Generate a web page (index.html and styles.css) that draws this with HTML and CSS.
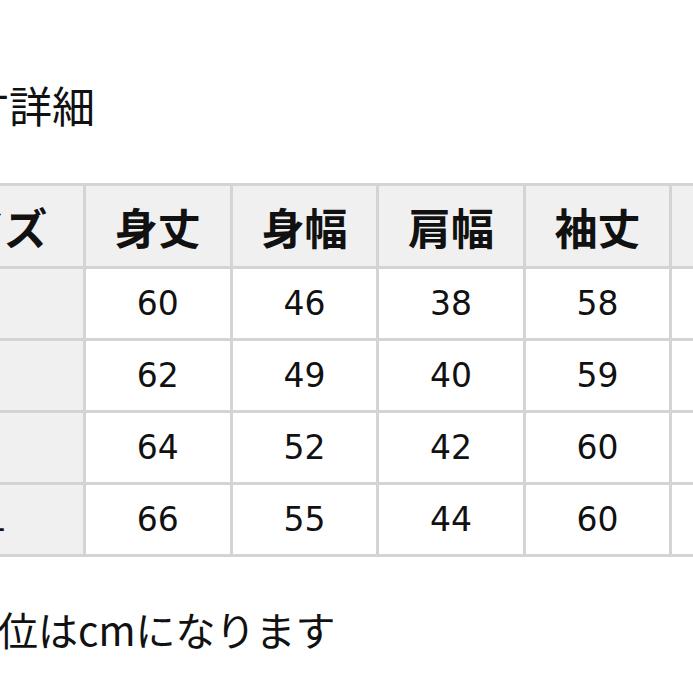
FILE: index.html
```html
<!DOCTYPE html>
<html lang="ja">
<head>
<meta charset="utf-8">
<link rel="stylesheet" href="styles.css">
</head>
<body>
<div class="page">
  <h2 class="title">採寸詳細</h2>
  <table class="sizes">
    <colgroup>
      <col class="c-label"><col class="c-val"><col class="c-val"><col class="c-val"><col class="c-val"><col class="c-val">
    </colgroup>
    <thead>
      <tr><th class="label">サイズ</th><th>身丈</th><th>身幅</th><th>肩幅</th><th>袖丈</th><th>着丈</th></tr>
    </thead>
    <tbody>
      <tr><td class="label">S</td><td>60</td><td>46</td><td>38</td><td>58</td><td></td></tr>
      <tr><td class="label">M</td><td>62</td><td>49</td><td>40</td><td>59</td><td></td></tr>
      <tr><td class="label">L</td><td>64</td><td>52</td><td>42</td><td>60</td><td></td></tr>
      <tr><td class="label">XL</td><td>66</td><td>55</td><td>44</td><td>60</td><td></td></tr>
    </tbody>
  </table>
  <p class="note">単位はcmになります</p>
</div>
</body>
</html>
```
FILE: styles.css
```css
html, body {
  margin: 0;
  padding: 0;
  background: #ffffff;
  overflow: hidden;
}
body {
  width: 693px;
  height: 693px;
  font-family: "Noto Sans CJK JP", "Noto Sans", sans-serif;
  color: #111111;
}
.page {
  padding-top: 76px;
  width: 693px;
}
.title {
  margin: 0 0 0 -77px;
  font-size: 43px;
  font-weight: 400;
  line-height: 56px;
  white-space: nowrap;
}
.sizes {
  margin: 51px 0 0 -119px;
  border-collapse: collapse;
  table-layout: fixed;
  width: 935px;
}
.c-label { width: 202px; }
.c-val { width: 146.6px; }
.sizes th,
.sizes td {
  border: 3px solid #d4d4d4;
  padding: 0;
  text-align: center;
  vertical-align: middle;
}
.sizes th {
  height: 80px;
  background: #f0f0f0;
  font-size: 43px;
  font-weight: 700;
  white-space: nowrap;
}
.sizes td {
  height: 69px;
  font-family: "DejaVu Sans", "Noto Sans CJK JP", sans-serif;
  font-size: 33px;
  font-weight: 400;
}
.sizes .label {
  background: #f0f0f0;
}
.note {
  margin: 44px 0 0 -42px;
  font-size: 40px;
  line-height: 56px;
  white-space: nowrap;
}
```
